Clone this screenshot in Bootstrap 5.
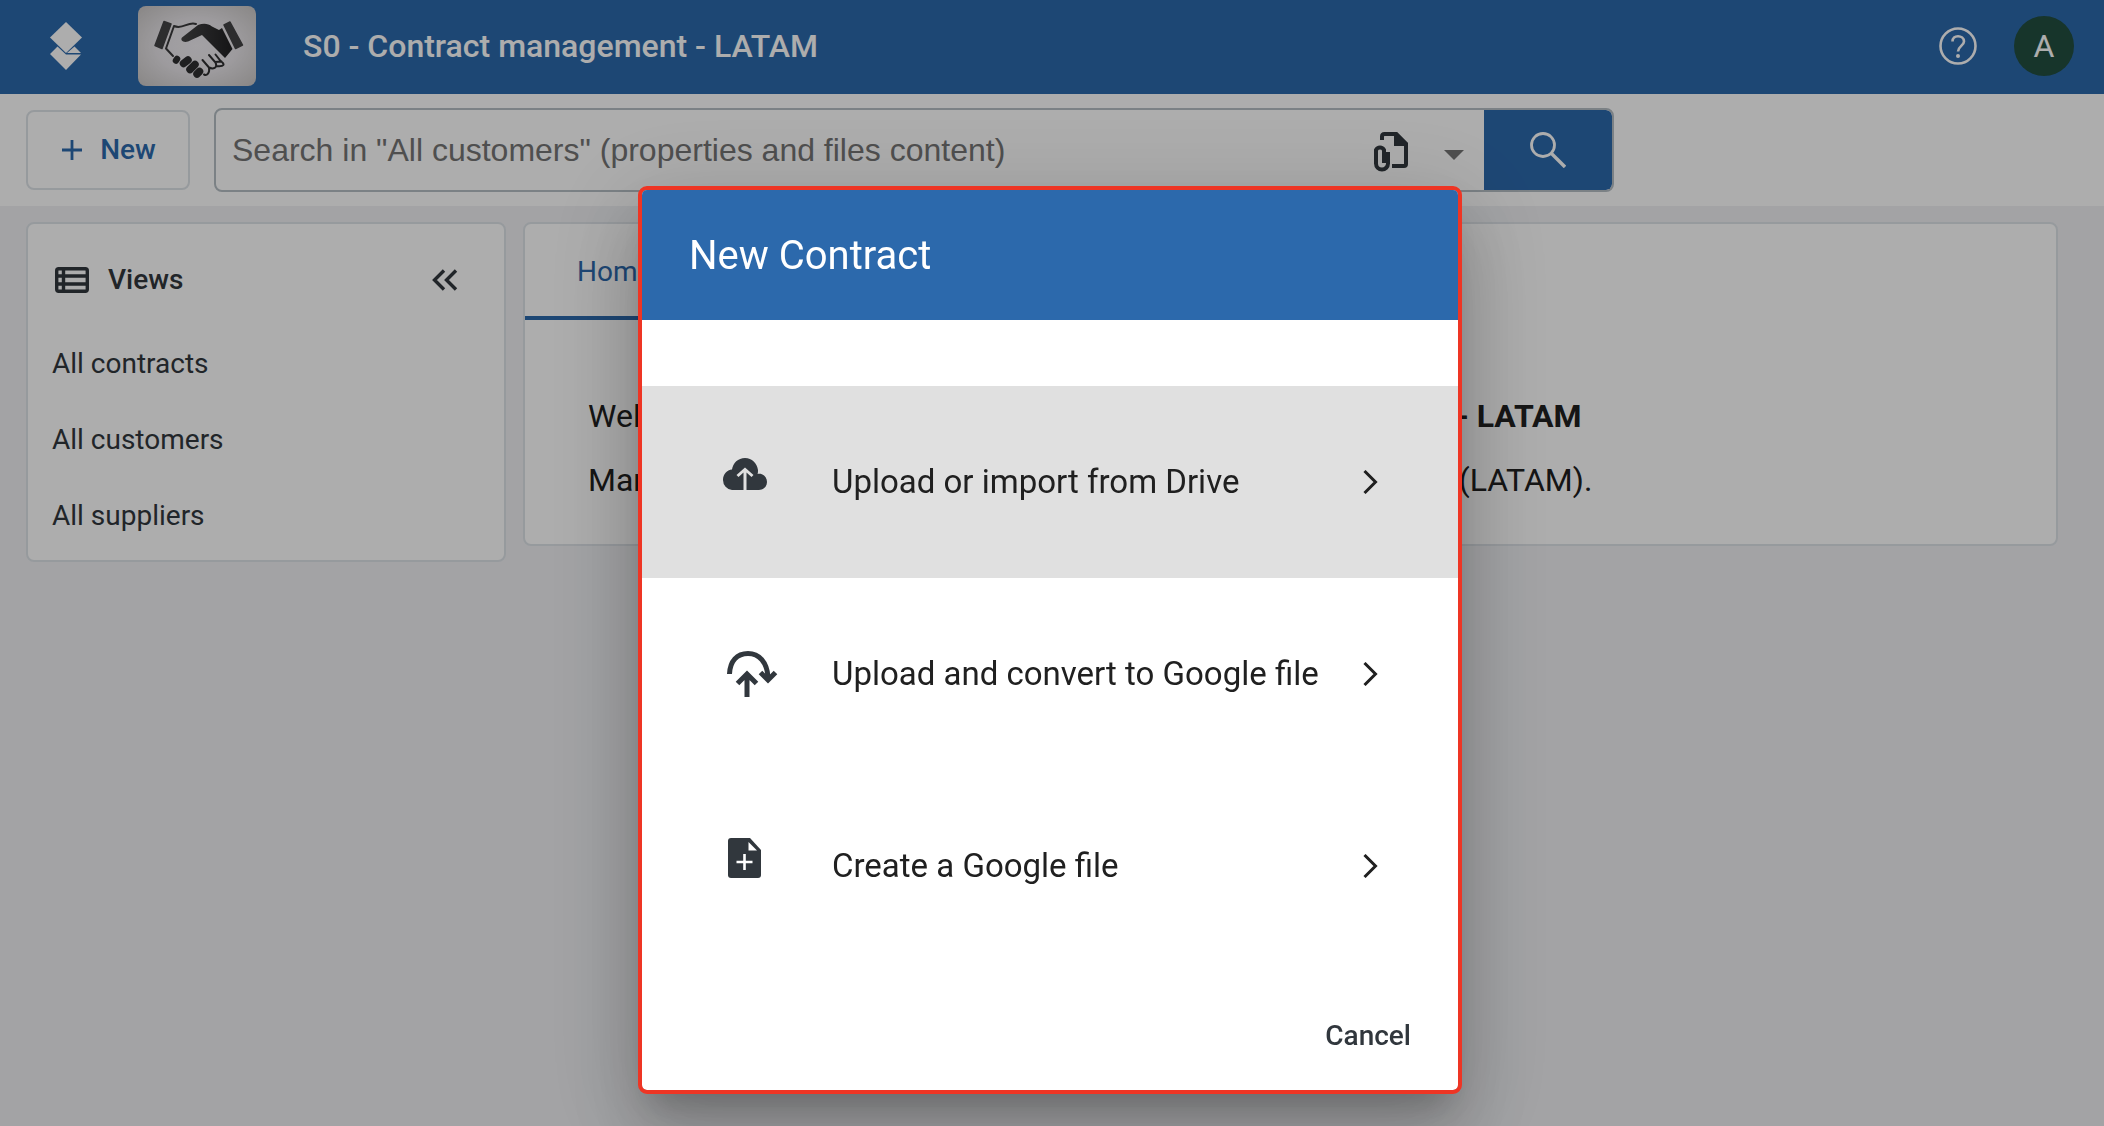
<!DOCTYPE html>
<html lang="en">
<head>
<meta charset="utf-8">
<meta name="viewport" content="width=device-width, initial-scale=1">
<title>S0 - Contract management - LATAM</title>
<link href="https://cdn.jsdelivr.net/npm/bootstrap@5.3.0/dist/css/bootstrap.min.css" rel="stylesheet">
<style>
  :root { --brand: #2c69ac; --ink: #31373d; --line: #dee3e8; }
  body { font-family: Roboto, sans-serif; font-size: 28px; line-height: 36px; background: #f0f1f4; color: var(--ink); min-height: 100vh; overflow: hidden; }
  svg { display: block; flex: none; }
  a { color: inherit; text-decoration: none; }
  .topbar { background: var(--brand); height: 94px; padding: 0 30px 2px 50px; }
  .app-title { font-size: 32px; line-height: 40px; font-weight: 500; margin-left: 47px; }
  .app-thumb { margin-left: 56px; }
  .avatar { width: 60px; height: 60px; background: #224e40; font-size: 32px; margin-left: 37px; }
  .toolbar { background: #fff; height: 112px; padding: 0 26px 0 26px; gap: 24px; }
  .btn-new { width: 164px; height: 80px; border: 2px solid var(--line); border-radius: 8px; color: var(--brand); font-size: 28px; font-weight: 500; gap: 18px; padding: 0 2px 0 4px; }
  .search { width: 1400px; height: 84px; border: 2px solid #b5bec4; border-radius: 8px; background: #fff; overflow: hidden; }
  .search .form-control { font-family: "Liberation Sans", Arial, sans-serif; font-size: 32px; border: 0; padding: 0 0 0 16px; background: none; }
  .search .form-control::placeholder { color: #757575; }
  .search .btn { border: 0; border-radius: 0; padding: 0; }
  .search .btn-files { padding-top: 4px; margin-right: 20px; }
  .btn-go.btn { background: var(--brand); width: 128px; border-radius: 0 6px 6px 0; }
  .content { padding: 16px 46px 0 26px; gap: 17px; }
  .panel { background: #fff; border: 2px solid var(--line); border-radius: 8px; }
  .sidebar { width: 480px; flex: none; }
  .side-head { height: 112px; padding: 0 46px 0 27px; gap: 19px; }
  .side-head h2 { font-size: 28px; line-height: 36px; font-weight: 500; margin: 0; }
  .side-list { padding: 10px 24px 26px; gap: 40px; }
  .tab-home { color: var(--brand); padding: 30px 52px 26px; border-bottom: 4px solid var(--brand); width: 180px; height: 96px; font-size: 28px; }
  .welcome { color: #202020; font-size: 32px; line-height: 40px; padding: 76px 63px 44px; white-space: nowrap; }
  .welcome p { margin: 0; }
  .welcome p + p { margin-top: 24px; }
  .modal-backdrop { --bs-backdrop-opacity: .32; }
  .modal { padding-right: 4px; overflow: hidden; }
  .modal-dialog { max-width: 824px; margin: 186px auto 0; }
  .modal-content { border: 4px solid #ee3524; border-radius: 9px; overflow: hidden; box-shadow: 0 22px 30px -14px rgba(0,0,0,.2), 0 48px 76px 6px rgba(0,0,0,.14), 0 18px 92px 16px rgba(0,0,0,.12); }
  .modal-header { background: var(--brand); color: #fff; height: 130px; padding: 2px 47px 0; border: 0; border-radius: 0; }
  .modal-title { font-size: 40px; line-height: 48px; font-weight: 400; }
  .modal-body { padding: 66px 0 0; }
  .choice.list-group-item { height: 192px; border: 0; border-radius: 0; padding: 0 80px; font-size: 33px; line-height: 40px; color: #202020; display: flex; align-items: center; }
  .choice.is-hot { background: #e0e0e0; }
  .choice-icon { width: 110px; padding-bottom: 16px; }
  .modal-footer { border: 0; height: 128px; padding: 20px 39px 0; }
  .modal-footer > * { margin: 0; }
  .btn-cancel { font-size: 28px; line-height: 36px; font-weight: 500; color: var(--ink); padding: 8px; border: 0; }
</style>
<script defer src="https://cdn.jsdelivr.net/npm/bootstrap@5.3.0/dist/js/bootstrap.bundle.min.js"></script>
</head>
<body>
<header class="topbar d-flex align-items-center text-white">
  <a href="#" aria-label="Library home">
    <svg width="32" height="48" viewBox="0 0 32 48" fill="#fff"><path d="M16 0 32 15.500 16 31 0 15.500Z"/><path d="M7.500 24.500 16 32.500H31L16 48 0 32Z"/><path d="M24.500 24.500 31 31H17Z"/></svg>
  </a>
  <svg class="app-thumb" width="118" height="80" viewBox="0 0 118 80" role="img" aria-label="Handshake">
    <defs><radialGradient id="paper" cx=".5" cy=".5" r=".68"><stop offset="0" stop-color="#f0edf2"/><stop offset=".5" stop-color="#e8e5e9"/><stop offset="1" stop-color="#cbc8c7"/></radialGradient>
    <linearGradient id="sleeve" x2="1"><stop stop-color="#454546"/><stop offset="1" stop-color="#202022"/></linearGradient></defs>
    <rect width="118" height="80" rx="8" fill="url(#paper)"/>
    <path d="M26 15.500 33 18 24 42.500 17 39.500Z" fill="#434345" stroke="#434345" stroke-width="1.500" stroke-linejoin="round"/>
    <path d="M92 16 86 19 97.500 42.500 104.500 39Z" fill="#434345" stroke="#434345" stroke-width="1.500" stroke-linejoin="round"/>
    <path d="M58 18C50 15 45 24 36 20L28 42.500 35 50" fill="none" stroke="#3a3a3c" stroke-width="2" stroke-linecap="round" stroke-linejoin="round"/>
    <path d="M44 31.500 60 19C65 17 70 17 74 20.500L81 24 84 22 94.500 43 87 52 64 29 50 35.500C45 37 42 34 44 31.500Z" fill="url(#sleeve)"/>
    <g stroke="#2e2e30" stroke-linecap="round"><path d="M38 54.500 39 53" stroke-width="6.500"/><path d="M45.500 57.500 50 54" stroke-width="7.500"/><path d="M52 63.500 57 58.500" stroke-width="7.500"/><path d="M59 68 61.500 65.500" stroke-width="7.500"/></g>
    <path d="M64.500 54 71 61.500C72 67 69 70 66 68.500M71 49 77.500 56.500C80 62 75 63.500 71 61.500M77 56 83.500 55.500M77.500 48.500 83 55.500C87 58 87 61 78 60" fill="none" stroke="#2e2e30" stroke-width="2" stroke-linecap="round"/>
  </svg>
  <h1 class="app-title mb-0">S0 - Contract management - LATAM</h1>
  <a href="#" class="ms-auto" aria-label="Help">
    <svg width="38" height="38" viewBox="0 0 38 38" fill="none" stroke="#fff" stroke-width="2.600"><circle cx="19" cy="19" r="17.500"/><path d="M13.500 14.500C13.500 11 16 9.200 19 9.200S25 11 25 14.500C25 18.500 19 19.500 19 24.500"/><circle cx="19" cy="29" r="2" fill="#fff" stroke="none"/></svg>
  </a>
  <a href="#" class="avatar rounded-circle d-flex align-items-center justify-content-center">A</a>
</header>

<div class="toolbar d-flex align-items-center">
  <button type="button" class="btn btn-new d-flex align-items-center justify-content-center">
    <svg width="20" height="20" viewBox="0 0 20 20" stroke="currentColor" stroke-width="2.800"><path d="M10 0V20M0 10H20"/></svg>New
  </button>
  <form class="search d-flex" role="search">
    <input class="form-control shadow-none flex-fill" type="search" aria-label="Search" placeholder="Search in &quot;All customers&quot; (properties and files content)">
    <button type="button" class="btn btn-files flex-shrink-0" aria-label="Search in attachments">
      <svg width="34" height="40" viewBox="0 0 34 40" fill="none" stroke="#31373d"><path d="M8 8V4.500Q8 2 10.500 2H22L32 12V32Q32 34 30 34H18" stroke-width="4"/><path d="M20 0H23L34 11V14H20Z" fill="#31373d" stroke="none"/><path d="M14 20V31.500A6 6 0 0 1 2 31.500V18A4.500 4.500 0 0 1 10 18V31" stroke-width="4"/></svg>
    </button>
    <button type="button" class="btn flex-shrink-0 px-3 me-1" aria-label="Search options">
      <svg width="20" height="20" viewBox="0 0 20 20"><path d="M0 10H20L10 20Z" fill="#757575"/></svg>
    </button>
    <button type="submit" class="btn btn-go flex-shrink-0 d-flex align-items-center justify-content-center" aria-label="Run search">
      <svg width="36" height="36" viewBox="0 0 36 36" fill="none" stroke="#fff" stroke-width="2.800"><circle cx="13" cy="13" r="11.500"/><path d="M21.500 21.500 35 35" stroke-width="3.400"/></svg>
    </button>
  </form>
</div>

<div class="content d-flex align-items-start">
  <nav class="panel sidebar" aria-label="Views">
    <div class="side-head d-flex align-items-center">
      <svg width="34" height="26" viewBox="0 0 34 26" fill="none" stroke="#31373d" stroke-width="3.400"><rect x="1.700" y="1.700" width="30.600" height="22.600" rx="2"/><path d="M8.500 2V24M2 9H32M2 17H32"/></svg>
      <h2>Views</h2>
      <button type="button" class="btn p-0 border-0 ms-auto" aria-label="Collapse"><svg width="26" height="22" viewBox="0 0 26 22" fill="none" stroke="#31373d" stroke-width="3.400"><path d="M12 1.500 2.500 11 12 20.500M24 1.500 14.500 11 24 20.500"/></svg></button>
    </div>
    <div class="side-list d-flex flex-column">
      <a href="#">All contracts</a>
      <a href="#">All customers</a>
      <a href="#">All suppliers</a>
    </div>
  </nav>
  <main class="panel flex-fill">
    <div class="d-flex"><a class="tab-home" href="#">Home</a></div>
    <div class="welcome">
      <p>Welcome to your AODocs library: <b>S0 - Contract management - LATAM</b></p>
      <p>Manage all customer and supplier contracts in Latin America (LATAM).</p>
    </div>
  </main>
</div>

<div class="modal-backdrop show"></div>
<div class="modal show d-block" tabindex="-1" role="dialog" aria-modal="true" aria-labelledby="dlg-title">
  <div class="modal-dialog">
    <div class="modal-content">
      <div class="modal-header"><h2 class="modal-title" id="dlg-title">New Contract</h2></div>
      <div class="modal-body">
        <div class="list-group">
          <button type="button" class="choice is-hot list-group-item list-group-item-action">
            <span class="choice-icon"><svg width="46" height="32" viewBox="0 0 46 32"><path d="M10 32A10 10 0 0 1 1 22C1 16 5 12 10 11.500 11 5 16 0 23 0S35 5 36 12C36 14 36 15 35.500 16 41 15 45 19 45 24S41 32 37 32H24.500V14.500L29.500 19 31.500 17 23 9.500 14.500 17 16.500 19 21.500 14.500V32Z" fill="#31373d"/></svg></span>
            <span>Upload or import from Drive</span>
            <svg class="ms-auto" width="15" height="24" viewBox="0 0 15 24" fill="none" stroke="#202020" stroke-width="3"><path d="M1.500 1 12.500 12 1.500 23"/></svg>
          </button>
          <button type="button" class="choice list-group-item list-group-item-action">
            <span class="choice-icon"><svg width="56" height="62" viewBox="0 -16 56 62" fill="none" stroke="#31373d" stroke-width="5"><path d="M7.500 23C8 10 15 2.500 26 2.500S45 11 46 26"/><path d="M38.500 21.500 46 29 53.500 21.500" stroke-width="5"/><path d="M25 46V24M15.500 32.500 25 23 34.500 32.500" stroke-width="5"/></svg></span>
            <span>Upload and convert to Google file</span>
            <svg class="ms-auto" width="15" height="24" viewBox="0 0 15 24" fill="none" stroke="#202020" stroke-width="3"><path d="M1.500 1 12.500 12 1.500 23"/></svg>
          </button>
          <button type="button" class="choice list-group-item list-group-item-action">
            <span class="choice-icon"><svg width="40" height="40" viewBox="0 0 40 40"><path d="M9 0H28L39 12V37Q39 40 36 40H9Q6 40 6 37V3Q6 0 9 0Z" fill="#31373d"/><path d="M26.500 4V12.500H35Z" fill="#fff"/><path d="M22.500 16V32M14.500 24H30.500" stroke="#fff" stroke-width="2.600"/></svg></span>
            <span>Create a Google file</span>
            <svg class="ms-auto" width="15" height="24" viewBox="0 0 15 24" fill="none" stroke="#202020" stroke-width="3"><path d="M1.500 1 12.500 12 1.500 23"/></svg>
          </button>
        </div>
      </div>
      <div class="modal-footer"><button type="button" class="btn btn-cancel">Cancel</button></div>
    </div>
  </div>
</div>
</body>
</html>
